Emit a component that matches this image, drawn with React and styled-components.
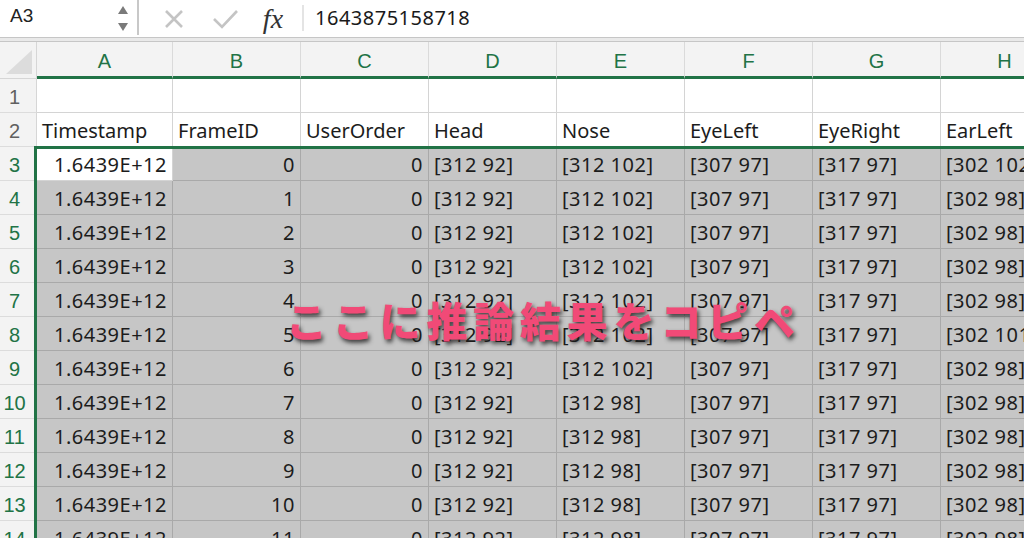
import React from "react";
import styled, { createGlobalStyle } from "styled-components";

const Global = createGlobalStyle`
  html, body { margin: 0; padding: 0; background: #fff; overflow: hidden; }
  body { font-family: "Noto Sans", "Noto Sans CJK JP", sans-serif; }
`;

const Page = styled.div`
  width: 1024px;
  height: 538px;
  overflow: hidden;
  display: flex;
  flex-direction: column;
  background: #fff;
`;

const FormulaBar = styled.div`
  height: 37px;
  box-sizing: border-box;
  padding-bottom: 5px;
  display: flex;
  align-items: center;
  background: #fff;
  flex-shrink: 0;
`;

const NameBox = styled.div`
  width: 103px;
  padding-left: 10px;
  font-family: "Liberation Sans", Arial, sans-serif;
  font-size: 19px;
  color: #222;
`;

const Spinner = styled.div`
  width: 20px;
  padding-right: 4px;
  display: flex;
  flex-direction: column;
  align-items: center;
  gap: 9px;
  padding-top: 5px;
`;

const VDivider = styled.div`
  width: 2px;
  align-self: ${(p) => (p.$full ? "stretch" : "center")};
  height: ${(p) => (p.$full ? "auto" : "26px")};
  margin: ${(p) => (p.$full ? "0 0 -3px 0" : "4px 0 0 0")};
  background: ${(p) => (p.$full ? "#c8c8c8" : "#e4e4e4")};
`;

const IconGroup = styled.div`
  display: flex;
  align-items: center;
  padding-left: 25px;
  width: 138px;
  padding-top: 5px;
`;

const IconSlot = styled.div`
  width: ${(p) => p.$w}px;
  display: flex;
  align-items: center;
  justify-content: flex-start;
`;

const Fx = styled.span`
  font-family: "Liberation Serif", "Times New Roman", serif;
  font-style: italic;
  font-size: 28px;
  color: #333;
  line-height: 1;
`;

const FormulaValue = styled.div`
  padding-left: 11px;
  padding-top: 3px;
  font-family: "Noto Sans", sans-serif;
  font-size: 20px;
  letter-spacing: 0.5px;
  color: #1a1a1a;
`;

const Band = styled.div`
  height: 3px;
  flex-shrink: 0;
  background: #e9e9e9;
  border-top: 1px solid #c6c6c6;
  border-bottom: 1px solid #c6c6c6;
`;

const SheetArea = styled.div`
  position: relative;
  flex: 1;
  overflow: hidden;
`;

const Grid = styled.div`
  display: grid;
  grid-template-columns: 37px 136px repeat(7, 128px);
  grid-template-rows: 37px;
  grid-auto-rows: 34px;
  width: max-content;
`;

const Corner = styled.div`
  background: #f3f3f3;
  border-right: 1px solid #d6d6d6;
  border-bottom: 1px solid #d6d6d6;
  box-sizing: border-box;
  display: flex;
  align-items: flex-end;
  justify-content: flex-end;
  padding: 0 4px 4px 0;
`;

const ColHeader = styled.div`
  box-sizing: border-box;
  background: #f3f3f3;
  border-right: 1px solid #dadada;
  border-bottom: 3px solid #217346;
  display: flex;
  align-items: center;
  justify-content: center;
  font-family: "Liberation Sans", Arial, sans-serif;
  font-size: 20px;
  color: #217346;
  padding-top: 4px;
`;

const RowHeader = styled.div`
  box-sizing: border-box;
  background: #f3f3f3;
  border-right: 1px solid #d6d6d6;
  border-bottom: 1px solid #dcdcdc;
  display: flex;
  align-items: center;
  justify-content: center;
  padding-right: 7px;
  padding-top: 3px;
  font-family: "Liberation Sans", Arial, sans-serif;
  font-size: 20px;
  color: ${(p) => (p.$sel ? "#217346" : "#606060")};
`;

const Cell = styled.div`
  box-sizing: border-box;
  background: ${(p) => (p.$sel ? "#c6c6c6" : "#fff")};
  border-right: 1px solid ${(p) => (p.$sel ? "#a9a9a9" : "#d4d4d4")};
  border-bottom: 1px solid ${(p) => (p.$sel ? "#a9a9a9" : "#d4d4d4")};
  display: flex;
  align-items: center;
  justify-content: ${(p) => (p.$right ? "flex-end" : "flex-start")};
  padding: 2px 5px 0 5px;
  font-size: 20px;
  letter-spacing: ${(p) => (p.$num ? "0.5px" : "0")};
  color: #1c1c1c;
  white-space: nowrap;
  overflow: hidden;
`;

const Selection = styled.div`
  position: absolute;
  left: 34px;
  top: 104px;
  right: -10px;
  bottom: -10px;
  border: 3px solid #217346;
  pointer-events: none;
`;

const Caption = styled.div`
  position: absolute;
  left: 286px;
  top: 257px;
  font-family: "Noto Sans CJK JP", sans-serif;
  font-weight: 900;
  font-size: 41px;
  letter-spacing: 5.8px;
  color: #f14a77;
  text-shadow: 2px 3px 4px rgba(30, 30, 30, 0.8);
  white-space: nowrap;
  line-height: 1;
`;

const cols = ["A", "B", "C", "D", "E", "F", "G", "H"];
const headers = ["Timestamp", "FrameID", "UserOrder", "Head", "Nose", "EyeLeft", "EyeRight", "EarLeft"];
const earLeft = ["[302 102]", "[302 98]", "[302 98]", "[302 98]", "[302 98]", "[302 101]", "[302 98]", "[302 98]", "[302 98]", "[302 98]", "[302 98]", "[302 98]"];

const dataRows = Array.from({ length: 12 }, (_, i) => [
  { v: "1.6439E+12", r: true },
  { v: String(i), r: true },
  { v: "0", r: true },
  { v: "[312 92]" },
  { v: i < 7 ? "[312 102]" : "[312 98]" },
  { v: "[307 97]" },
  { v: "[317 97]" },
  { v: earLeft[i] },
]);

const Tri = ({ up }) => (
  <svg width="10" height="8" viewBox="0 0 10 8">
    <path d={up ? "M5 0 L10 8 L0 8 Z" : "M0 0 L10 0 L5 8 Z"} fill="#7a7a7a" />
  </svg>
);

export default function App() {
  return (
    <Page>
      <Global />
      <FormulaBar>
        <NameBox>A3</NameBox>
        <Spinner>
          <Tri up />
          <Tri />
        </Spinner>
        <VDivider $full />
        <IconGroup>
          <IconSlot $w={50}>
            <svg width="20" height="20" viewBox="0 0 20 20">
              <path d="M2 2 L18 18 M18 2 L2 18" stroke="#c4c4c4" strokeWidth="2.6" />
            </svg>
          </IconSlot>
          <IconSlot $w={51}>
            <svg width="25" height="20" viewBox="0 0 25 20">
              <path d="M1 10 L9 18 L24 2" stroke="#c4c4c4" strokeWidth="2.6" fill="none" />
            </svg>
          </IconSlot>
          <IconSlot $w={40}>
            <Fx>fx</Fx>
          </IconSlot>
        </IconGroup>
        <VDivider />
        <FormulaValue>1643875158718</FormulaValue>
      </FormulaBar>
      <Band />
      <SheetArea>
        <Grid>
          <Corner>
            <svg width="26" height="24" viewBox="0 0 26 24">
              <path d="M26 0 L26 24 L0 24 Z" fill="#dcdcdc" />
            </svg>
          </Corner>
          {cols.map((c) => (
            <ColHeader key={c}>{c}</ColHeader>
          ))}

          <RowHeader>1</RowHeader>
          {cols.map((c) => (
            <Cell key={"1" + c} />
          ))}

          <RowHeader>2</RowHeader>
          {headers.map((h) => (
            <Cell key={h}>{h}</Cell>
          ))}

          {dataRows.map((row, i) => (
            <React.Fragment key={i}>
              <RowHeader $sel>{i + 3}</RowHeader>
              {row.map((cell, j) => (
                <Cell key={j} $num $sel={!(i === 0 && j === 0)} $right={cell.r}>
                  {cell.v}
                </Cell>
              ))}
            </React.Fragment>
          ))}
        </Grid>
        <Selection />
        <Caption>ここに推論結果をコピペ</Caption>
      </SheetArea>
    </Page>
  );
}
